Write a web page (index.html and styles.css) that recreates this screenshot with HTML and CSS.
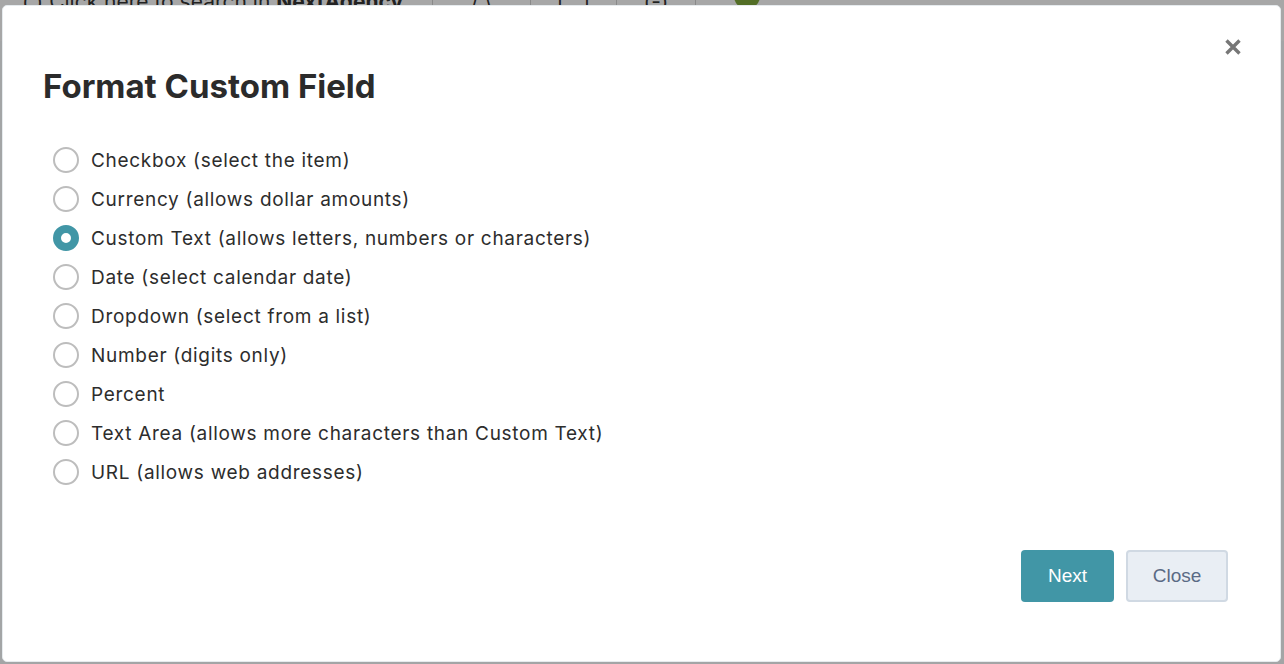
FILE: index.html
```html
<!DOCTYPE html>
<html>
<head>
<meta charset="utf-8">
<link rel="stylesheet" href="styles.css">
</head>
<body>
<div class="app-bar">
  <div class="search">( ) Click here to search in <b>NextAgency</b></div>
  <div class="bar-item w97">/ \</div>
  <div class="bar-item w85">[...]</div>
  <div class="bar-item w78">(-)</div>
  <div class="bar-avatar"></div>
</div>
<div class="backdrop"></div>
<div class="modal">
  <button class="close-x" aria-label="Close">
    <svg width="18" height="18" viewBox="0 0 18 18"><path d="M2.5 2.5 L15.5 15.5 M15.5 2.5 L2.5 15.5" stroke="#777" stroke-width="3.4" stroke-linecap="butt"/></svg>
  </button>
  <h1 class="title">Format Custom Field</h1>
  <div class="options">
    <label class="option"><span class="radio"></span><span class="label">Checkbox (select the item)</span></label>
    <label class="option"><span class="radio"></span><span class="label">Currency (allows dollar amounts)</span></label>
    <label class="option"><span class="radio checked"></span><span class="label">Custom Text (allows letters, numbers or characters)</span></label>
    <label class="option"><span class="radio"></span><span class="label">Date (select calendar date)</span></label>
    <label class="option"><span class="radio"></span><span class="label">Dropdown (select from a list)</span></label>
    <label class="option"><span class="radio"></span><span class="label">Number (digits only)</span></label>
    <label class="option"><span class="radio"></span><span class="label">Percent</span></label>
    <label class="option"><span class="radio"></span><span class="label">Text Area (allows more characters than Custom Text)</span></label>
    <label class="option"><span class="radio"></span><span class="label">URL (allows web addresses)</span></label>
  </div>
  <div class="footer">
    <button class="btn btn-primary">Next</button>
    <button class="btn btn-secondary">Close</button>
  </div>
</div>
</body>
</html>
```
FILE: styles.css
```css
html, body {
  margin: 0;
  padding: 0;
  height: 100%;
}
body {
  background: #f4f6f8;
  font-family: Inter, "Noto Sans", sans-serif;
  overflow: hidden;
  position: relative;
}
.app-bar {
  height: 52px;
  display: flex;
  align-items: flex-start;
  background: #fafafa;
  color: #333;
  font-size: 21px;
  margin-top: -11px;
}
.search {
  padding: 0 0 0 22px;
  width: 410px;
  white-space: nowrap;
}
.bar-item {
  border-left: 1px solid #ccc;
  text-align: center;
  height: 40px;
}
.w97 { width: 97px; }
.w85 { width: 85px; }
.w78 { width: 78px; border-right: 1px solid #ccc; }
.bar-avatar {
  width: 26px;
  height: 26px;
  border-radius: 50%;
  background: #7da43a;
  margin-left: 38px;
  margin-top: -6px;
}
.backdrop {
  position: absolute;
  inset: 0;
  background: rgba(0, 0, 0, 0.33);
}
.modal {
  position: absolute;
  left: 2px;
  top: 5px;
  width: 1279px;
  height: 657px;
  box-sizing: border-box;
  background: #fff;
  border-radius: 5px;
  border: 1px solid #e6ebee;
  padding: 0 52px 59px 40px;
  display: flex;
  flex-direction: column;
}
.close-x {
  position: absolute;
  right: 38px;
  top: 32px;
  background: none;
  border: 0;
  padding: 0;
  width: 18px;
  height: 18px;
}
.close-x svg { display: block; }
.title {
  margin: 60px 0 0 0;
  font-size: 33px;
  font-weight: 700;
  color: #2b2b2b;
  line-height: 40px;
  letter-spacing: 0;
}
.options {
  margin-top: 41px;
  display: flex;
  flex-direction: column;
  gap: 13px;
  padding-left: 10px;
}
.option {
  display: flex;
  align-items: center;
  height: 26px;
  gap: 12px;
}
.radio {
  width: 26px;
  height: 26px;
  box-sizing: border-box;
  border: 2px solid #bdbdbd;
  border-radius: 50%;
  background: #fff;
  flex: none;
}
.radio.checked {
  border: 8px solid #4196a6;
  background: #fff;
}
.label {
  font-size: 19px;
  color: #2d2d2d;
  letter-spacing: 0.7px;
}
.footer {
  margin-top: auto;
  display: flex;
  justify-content: flex-end;
  gap: 12px;
}
.btn {
  height: 52px;
  border-radius: 4px;
  font-family: "Liberation Sans", Arial, sans-serif;
  font-size: 19px;
  box-sizing: border-box;
}
.btn-primary {
  width: 93px;
  background: #4196a6;
  color: #fff;
  border: 0;
}
.btn-secondary {
  width: 102px;
  background: #e9eef4;
  color: #5a6a85;
  border: 2px solid #d0d9e3;
}
```
